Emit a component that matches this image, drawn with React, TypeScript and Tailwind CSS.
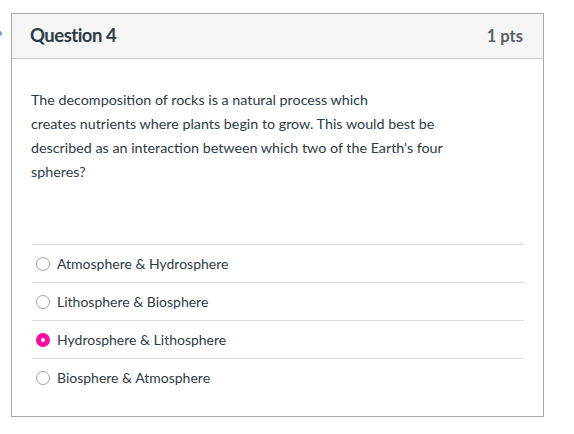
import React from "react";

const options = [
  { label: "Atmosphere & Hydrosphere", checked: false },
  { label: "Lithosphere & Biosphere", checked: false },
  { label: "Hydrosphere & Lithosphere", checked: true },
  { label: "Biosphere & Atmosphere", checked: false },
];

export default function App() {
  return (
    <div className="relative w-[574px] h-[434px] bg-white" style={{ fontFamily: "Lato, 'Noto Sans', sans-serif" }}>
      <div className="absolute left-[-3px] top-[31px] w-[5px] h-[5px] rounded-full bg-[#6aa3d6]" />
      <div className="pt-[13px] pl-[11px]">
        <div className="w-[533px] h-[404px] border border-[#a8a8a8] flex flex-col">
          <div className="h-[45px] bg-[#f5f5f5] border-b border-[#c7c7c7] flex items-center justify-between pl-[18px] pr-[20px]">
            <span className="text-[18.5px] font-bold text-[#2d3b45] tracking-[-0.5px]">Question 4</span>
            <span className="text-[16.5px] font-bold text-[#5a5f63]">1 pts</span>
          </div>
          <div className="pt-[29px] pl-[19px] pr-[19px] text-[14.3px] leading-[24px] text-[#2d3b45] whitespace-nowrap">
            The decomposition of rocks is a natural process which
            <br />
            creates nutrients where plants begin to grow. This would best be
            <br />
            described as an interaction between which two of the Earth's four
            <br />
            spheres?
          </div>
          <div className="mt-[60px] ml-[20px] mr-[19px]">
            {options.map((o) => (
              <div key={o.label} className="h-[38px] border-t border-[#dcdcdc] flex items-center">
                <div className="ml-[4px] w-[14px] h-[14px] flex items-center justify-center">
                  {o.checked ? (
                    <div className="w-[14px] h-[14px] rounded-full bg-[#ff0a9e] flex items-center justify-center">
                      <div className="w-[4px] h-[4px] rounded-full bg-white" />
                    </div>
                  ) : (
                    <div className="w-[14px] h-[14px] rounded-full border border-[#a0a0a0] bg-white" />
                  )}
                </div>
                <span className="ml-[7px] text-[14px] text-[#2d3b45]">{o.label}</span>
              </div>
            ))}
          </div>
        </div>
      </div>
    </div>
  );
}
